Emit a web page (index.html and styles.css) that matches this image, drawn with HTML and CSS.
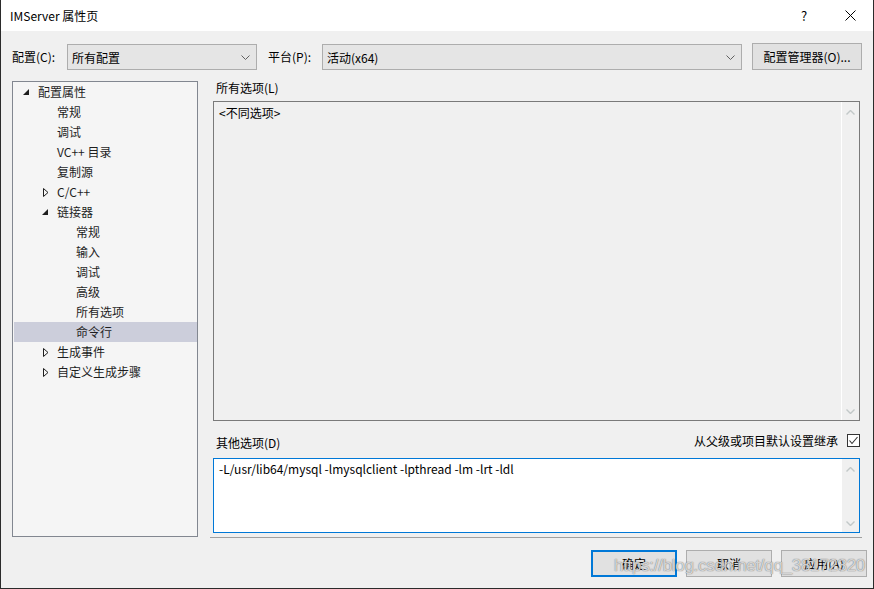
FILE: index.html
```html
<!DOCTYPE html>
<html lang="zh-CN">
<head>
    <meta charset="UTF-8">
    <title>IMServer 属性页</title>
    <link rel="stylesheet" href="styles.css">
</head>
<body>
    <div class="window">
        <!-- Titelleiste -->
        <div class="titlebar">
            <span class="title">IMServer 属性页</span>
            <span class="tb-btn">?</span>
            <span class="tb-btn">
                <svg width="11" height="11" viewBox="0 0 11 11"><path d="M0.5 0.5 L10.5 10.5 M10.5 0.5 L0.5 10.5" stroke="#000" stroke-width="1" fill="none"/></svg>
            </span>
        </div>

        <!-- Konfiguration / Plattform -->
        <div class="toolbar">
            <label class="tool-label">配置(C):</label>
            <div class="combo combo-config">
                <span>所有配置</span>
                <svg class="chev" width="9" height="5" viewBox="0 0 9 5"><path d="M0.5 0.5 L4.5 4.5 L8.5 0.5" stroke="#606060" fill="none"/></svg>
            </div>
            <label class="tool-label">平台(P):</label>
            <div class="combo combo-platform">
                <span>活动(x64)</span>
                <svg class="chev" width="9" height="5" viewBox="0 0 9 5"><path d="M0.5 0.5 L4.5 4.5 L8.5 0.5" stroke="#606060" fill="none"/></svg>
            </div>
            <button class="btn btn-manager">配置管理器(O)...</button>
        </div>

        <div class="main">
            <!-- Baum -->
            <div class="tree">
                <div class="node lvl0"><span class="arrow"><svg width="6" height="6" viewBox="0 0 6 6"><path d="M6 0 L6 6 L0 6 Z" fill="#1e1e1e"/></svg></span>配置属性</div>
                <div class="node lvl1"><span class="arrow"></span>常规</div>
                <div class="node lvl1"><span class="arrow"></span>调试</div>
                <div class="node lvl1"><span class="arrow"></span>VC++ 目录</div>
                <div class="node lvl1"><span class="arrow"></span>复制源</div>
                <div class="node lvl1"><span class="arrow"><svg class="closed" width="6" height="9" viewBox="0 0 6 9"><path d="M0.5 0.5 L5 4.5 L0.5 8.5 Z" fill="none" stroke="#1e1e1e"/></svg></span>C/C++</div>
                <div class="node lvl1"><span class="arrow"><svg width="6" height="6" viewBox="0 0 6 6"><path d="M6 0 L6 6 L0 6 Z" fill="#1e1e1e"/></svg></span>链接器</div>
                <div class="node lvl2"><span class="arrow"></span>常规</div>
                <div class="node lvl2"><span class="arrow"></span>输入</div>
                <div class="node lvl2"><span class="arrow"></span>调试</div>
                <div class="node lvl2"><span class="arrow"></span>高级</div>
                <div class="node lvl2"><span class="arrow"></span>所有选项</div>
                <div class="node lvl2 selected"><span class="arrow"></span>命令行</div>
                <div class="node lvl1"><span class="arrow"><svg class="closed" width="6" height="9" viewBox="0 0 6 9"><path d="M0.5 0.5 L5 4.5 L0.5 8.5 Z" fill="none" stroke="#1e1e1e"/></svg></span>生成事件</div>
                <div class="node lvl1"><span class="arrow"><svg class="closed" width="6" height="9" viewBox="0 0 6 9"><path d="M0.5 0.5 L5 4.5 L0.5 8.5 Z" fill="none" stroke="#1e1e1e"/></svg></span>自定义生成步骤</div>
            </div>

            <!-- Optionen -->
            <div class="pane">
                <div class="pane-label">所有选项(L)</div>
                <div class="textbox readonly">
                    <div class="text">&lt;不同选项&gt;</div>
                    <div class="scroll">
                        <svg width="9" height="5" viewBox="0 0 9 5"><path d="M0.5 4.5 L4.5 0.5 L8.5 4.5" stroke="#c2c8c8" stroke-width="1.4" fill="none"/></svg>
                        <svg width="9" height="5" viewBox="0 0 9 5"><path d="M0.5 0.5 L4.5 4.5 L8.5 0.5" stroke="#c2c8c8" stroke-width="1.4" fill="none"/></svg>
                    </div>
                </div>
                <div class="row-other">
                    <div class="pane-label">其他选项(D)</div>
                    <div class="inherit">
                        <span>从父级或项目默认设置继承</span>
                        <span class="checkbox"><svg width="11" height="11" viewBox="0 0 11 11"><path d="M1.5 5.5 L4 8.5 L9.5 2" stroke="#333" stroke-width="1.1" fill="none"/></svg></span>
                    </div>
                </div>
                <div class="textbox editable">
                    <div class="text">-L/usr/lib64/mysql -lmysqlclient -lpthread -lm -lrt -ldl</div>
                    <div class="scroll">
                        <svg width="9" height="5" viewBox="0 0 9 5"><path d="M0.5 4.5 L4.5 0.5 L8.5 4.5" stroke="#c2c8c8" stroke-width="1.4" fill="none"/></svg>
                        <svg width="9" height="5" viewBox="0 0 9 5"><path d="M0.5 0.5 L4.5 4.5 L8.5 0.5" stroke="#c2c8c8" stroke-width="1.4" fill="none"/></svg>
                    </div>
                </div>
                <div class="separator"></div>
            </div>
        </div>

        <!-- Schaltflächen -->
        <div class="footer">
            <button class="btn btn-dialog default">确定</button>
            <button class="btn btn-dialog">取消</button>
            <button class="btn btn-dialog">应用(A)</button>
            <div class="watermark">https://blog.csdn.net/qq_38172320</div>
        </div>
    </div>
</body>
</html>
```

FILE: styles.css
```css
body {
    margin: 0;
    padding: 0;
    font-family: "Noto Sans CJK SC", "Noto Sans", sans-serif;
    font-size: 12px;
    color: #000;
    background: #f0f0f0;
}
.window {
    width: 874px;
    height: 589px;
    box-sizing: border-box;
    border: 1px solid #2b2b2b;
    border-top: none;
    background: #f0f0f0;
    position: relative;
    overflow: hidden;
}
.titlebar {
    height: 31px;
    background: #fff;
    display: flex;
    align-items: center;
    padding-left: 9px;
}
.title {
    flex: 1;
    font-size: 12px;
}
.tb-btn {
    width: 46px;
    height: 31px;
    display: flex;
    align-items: center;
    justify-content: center;
    font-size: 13px;
}
.toolbar {
    height: 50px;
    display: flex;
    align-items: flex-start;
    padding-top: 13px;
    padding-left: 11px;
    box-sizing: border-box;
}
.tool-label {
    height: 26px;
    line-height: 26px;
    margin-right: 0;
}
.tool-label:first-child {
    width: 55px;
}
.combo {
    height: 26px;
    box-sizing: border-box;
    border: 1px solid #adadad;
    background: #e5e5e5;
    display: flex;
    align-items: center;
    padding-left: 4px;
    padding-right: 6px;
}
.combo span {
    flex: 1;
}
.combo-config {
    width: 190px;
    margin-right: 11px;
}
.combo-platform {
    width: 420px;
    margin-left: 0;
    margin-right: 10px;
}
.toolbar .tool-label:nth-of-type(2) {
    width: 54px;
}
.btn {
    font-family: inherit;
    font-size: 12px;
    color: #000;
    background: #e1e1e1;
    border: 1px solid #adadad;
    padding: 0;
    box-sizing: border-box;
}
.btn-manager {
    width: 110px;
    height: 27px;
    margin-top: -1px;
}
.main {
    display: flex;
    height: 457px;
    padding-left: 11px;
    padding-right: 13px;
}
.tree {
    width: 186px;
    height: 456px;
    box-sizing: border-box;
    border: 1px solid #828790;
    background: #f5f5f5;
    margin-right: 15px;
}
.node {
    height: 20px;
    line-height: 20px;
    margin-left: 1px;
    margin-right: 0;
    display: flex;
    align-items: center;
    white-space: nowrap;
    color: #1e1e1e;
}
.node.selected {
    background: #cccedb;
}
.arrow {
    width: 15px;
    height: 20px;
    display: flex;
    align-items: center;
}
.arrow svg.closed {
    margin-left: 1px;
}
.lvl0 { padding-left: 9px; }
.lvl1 { padding-left: 28px; }
.lvl2 { padding-left: 47px; }
.pane {
    flex: 1;
    display: flex;
    flex-direction: column;
}
.pane-label {
    height: 20px;
    line-height: 14px;
    padding-left: 3px;
}
.textbox {
    display: flex;
    box-sizing: border-box;
}
.textbox .text {
    flex: 1;
    padding: 3px 5px;
    line-height: 16px;
}
.textbox .scroll {
    width: 17px;
    display: flex;
    flex-direction: column;
    justify-content: space-between;
    align-items: center;
    padding: 8px 0 6px;
    box-sizing: border-box;
    background: #f0f0f0;
}
.readonly {
    height: 320px;
    border: 1px solid #7a7a7a;
    background: #f0f0f0;
}
.readonly .scroll {
    border-left: 1px solid #fff;
    width: 18px;
}
.row-other {
    height: 37px;
    display: flex;
    align-items: flex-end;
    justify-content: space-between;
}
.row-other .pane-label {
    height: 21px;
    line-height: 12px;
}
.inherit {
    align-self: flex-start;
    margin-top: 11px;
    display: flex;
    align-items: center;
    gap: 9px;
}
.checkbox {
    width: 13px;
    height: 13px;
    box-sizing: border-box;
    border: 1px solid #333;
    background: #fff;
    display: flex;
    align-items: center;
    justify-content: center;
    margin-right: 0;
}
.editable {
    height: 75px;
    border: 1px solid #0078d7;
    background: #fff;
}
.editable .text {
    padding-top: 2px;
}
.separator {
    height: 1px;
    background: #a0a0a0;
    margin: 4px -2px 0 -3px;
}
.footer {
    display: flex;
    justify-content: flex-end;
    gap: 9px;
    padding-top: 12px;
    padding-right: 6px;
    position: relative;
}
.btn-dialog {
    width: 86px;
    height: 27px;
}
.btn-dialog.default {
    border: 2px solid #0078d7;
}
.watermark {
    position: absolute;
    right: 8px;
    top: 18px;
    font-family: "Liberation Sans", sans-serif;
    font-size: 17px;
    letter-spacing: -0.3px;
    color: rgba(255, 255, 255, 0.7);
    text-shadow: 0 0 1px rgba(90, 90, 90, 0.75), 0 0 1px rgba(90, 90, 90, 0.5);
    pointer-events: none;
    white-space: nowrap;
}
```
